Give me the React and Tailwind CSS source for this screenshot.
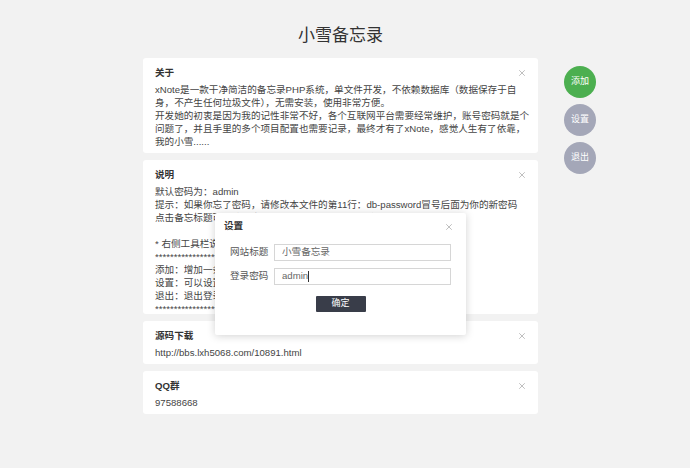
import { X } from "lucide-react";

const font = { fontFamily: '"Liberation Sans", "Noto Sans CJK SC", sans-serif' };

function Card({ title, children }) {
  return (
    <div className="bg-white rounded-[3px] pl-3 pr-[6px] pt-[8px] pb-[5px]">
      <div className="flex justify-between items-center h-[14px]">
        <h3 className="text-[9.6px] font-bold text-[#333]">{title}</h3>
        <X className="w-[10px] h-[10px] text-[#888] mr-[5px]" strokeWidth={1.3} />
      </div>
      <div className="mt-[3px] text-[9.6px] leading-[13px] text-[#444] whitespace-nowrap">{children}</div>
    </div>
  );
}

function Settings() {
  return (
    <div className="absolute left-[215px] top-[213px] w-[251px] h-[122px] bg-white rounded-[2px] shadow-[0_1px_8px_rgba(0,0,0,0.18)] px-[9px] pt-[7px]">
      <div className="flex justify-between items-center h-[13px]">
        <span className="text-[9.6px] font-bold text-[#333]">设置</span>
        <X className="w-[10px] h-[10px] text-[#888] mr-[3px]" strokeWidth={1.3} />
      </div>
      <div className="mt-[11px] flex flex-col gap-[7px] pl-[6px]">
        <div className="flex items-center gap-[6px]">
          <label className="w-[38px] whitespace-nowrap text-right text-[9.6px] text-[#555]">网站标题</label>
          <div className="w-[177px] h-[17px] border border-[#d6d6d6] flex items-center px-[7px] text-[9.6px] text-[#666]">
            小雪备忘录
          </div>
        </div>
        <div className="flex items-center gap-[6px]">
          <label className="w-[38px] whitespace-nowrap text-right text-[9.6px] text-[#555]">登录密码</label>
          <div className="w-[177px] h-[17px] border border-[#d6d6d6] flex items-center px-[7px] text-[9.6px] text-[#666]">
            admin<span className="w-px h-[11px] bg-[#333]"></span>
          </div>
        </div>
      </div>
      <div className="flex justify-center mt-[11px]">
        <button className="w-[50px] h-[16px] bg-[#393d49] text-white text-[9px] rounded-[1px]">确定</button>
      </div>
    </div>
  );
}

export default function App() {
  return (
    <div className="min-h-[468px] bg-[#f2f2f2] relative" style={font}>
      <div className="ml-[143px] w-[395px] pt-[23px]">
        <h1 className="text-center text-[17px] text-[#333] leading-[26px]">小雪备忘录</h1>
        <div className="mt-[9px] flex flex-col gap-[7px]">
          <Card title="关于">
            <p>xNote是一款干净简洁的备忘录PHP系统，单文件开发，不依赖数据库（数据保存于自</p>
            <p>身，不产生任何垃圾文件），无需安装，使用非常方便。</p>
            <p>开发她的初衷是因为我的记性非常不好，各个互联网平台需要经常维护，账号密码就是个</p>
            <p>问题了，并且手里的多个项目配置也需要记录，最终才有了xNote，感觉人生有了依靠，</p>
            <p>我的小雪......</p>
          </Card>
          <Card title="说明">
            <p>默认密码为：admin</p>
            <p>提示：如果你忘了密码，请修改本文件的第11行：db-password冒号后面为你的新密码</p>
            <p>点击备忘标题可以编辑内容，点击右侧关闭按钮删除</p>
            <p className="h-[13px]"></p>
            <p>* 右侧工具栏说明</p>
            <p>****************************************</p>
            <p>添加：增加一条新的备忘</p>
            <p>设置：可以设置网站标题和登录密码</p>
            <p>退出：退出登录状态</p>
            <p className="h-[7px]">****************************************</p>
          </Card>
          <Card title="源码下载">
            <p>http://bbs.lxh5068.com/10891.html</p>
          </Card>
          <Card title="QQ群">
            <p>97588668</p>
          </Card>
        </div>
      </div>

      <div className="absolute left-[564px] top-[66px] flex flex-col gap-[6px]">
        <div className="w-[32px] h-[32px] rounded-full bg-[#4caf50] text-white text-[9px] flex items-center justify-center">添加</div>
        <div className="w-[32px] h-[32px] rounded-full bg-[#a4a7b8] text-white text-[9px] flex items-center justify-center">设置</div>
        <div className="w-[32px] h-[32px] rounded-full bg-[#a4a7b8] text-white text-[9px] flex items-center justify-center">退出</div>
      </div>

      <Settings />
    </div>
  );
}
